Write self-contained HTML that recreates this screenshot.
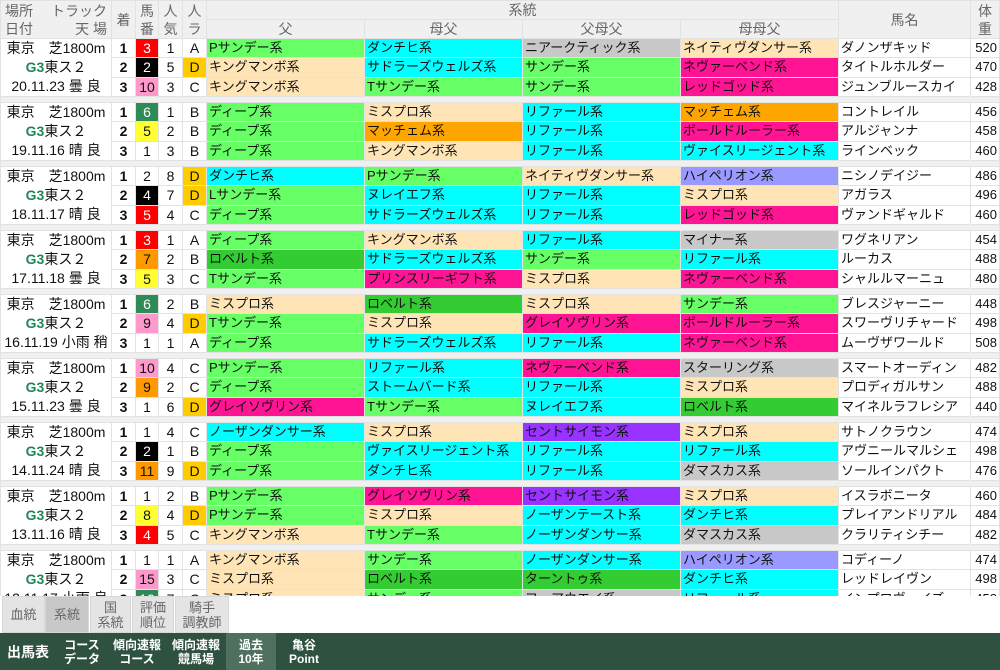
<!DOCTYPE html>
<html><head><meta charset="utf-8">
<style>
*{margin:0;padding:0;box-sizing:border-box}
body{width:1000px;height:670px;overflow:hidden;background:#fff;font-family:"Liberation Sans","Noto Sans CJK JP",sans-serif;position:relative}
table{position:absolute;left:0;top:0;width:1000px;table-layout:fixed;border-spacing:1px;background:#e2e2e2;font-size:13px;color:#111}
td,th{height:18px;line-height:18px;padding:0 2px;white-space:nowrap;overflow:hidden;background:#fff;font-weight:normal}
th{background:#f0f0f0;color:#666;font-size:14px;text-align:center}
.gap td{height:5px;line-height:5px;background:#f0f0f0;padding:0}
.pl{text-align:center;font-size:14px;line-height:19px;padding:0}
.pl b{color:#1a8a5a}
.n{text-align:center;font-size:14px}
.r{text-align:center;font-weight:bold;font-size:14px}
.w{text-align:right;font-size:13px}
.g{background:#66ff66}.p{background:#ffe4b5}.c{background:#00ffff}.y{background:#c8c8c8}.m{background:#ff1493}.o{background:#ffa500}.d{background:#33cc33}.v{background:#9933ff}.b{background:#9999ff}
.red{background:#ff0000;color:#fff}.blk{background:#000;color:#fff}.pk{background:#ff99cc}.gr{background:#2e8b57;color:#fff}.ye{background:#ffff33}.or{background:#ff9900}
.D{background:#ffcc00}
.tabs{position:absolute;left:0;top:596px;width:1000px;height:37px;background:#fff}
.tab{position:absolute;top:0;height:37px;background:#e4e4e4;color:#666;font-size:13px;line-height:15px;text-align:center;display:flex;align-items:center;justify-content:center;border:1px solid #d8d8d8}
.nav{position:absolute;left:0;top:633px;width:1000px;height:37px;background:#2f5140;color:#fff;font-size:12px;font-weight:bold}
.nv{position:absolute;top:0;height:37px;display:flex;align-items:center;justify-content:center;text-align:center;line-height:14px}
</style></head><body>
<table>
<colgroup><col style="width:110px"><col style="width:23px"><col style="width:22px"><col style="width:23px"><col style="width:23px"><col style="width:157px"><col style="width:157px"><col style="width:157px"><col style="width:157px"><col style="width:131px"><col style="width:28px"></colgroup>
<tr><th rowspan="2" style="line-height:18px;padding:0 4px;text-align:left"><div style="display:flex;justify-content:space-between"><span>場所</span><span>トラック</span></div><div style="display:flex;justify-content:space-between"><span>日付</span><span>天 場</span></div></th><th rowspan="2">着</th><th rowspan="2" style="line-height:18px">馬<br>番</th><th rowspan="2" style="line-height:18px">人<br>気</th><th rowspan="2" style="line-height:18px">人<br>ラ</th><th colspan="4">系統</th><th rowspan="2">馬名</th><th rowspan="2" style="line-height:18px">体<br>重</th></tr>
<tr><th>父</th><th>母父</th><th>父母父</th><th>母母父</th></tr>

<tr><td rowspan="3" class="pl">東京　芝1800m<br><b>G3</b>東ス２<br>20.11.23 曇 良</td><td class="r">1</td><td class="n red">3</td><td class="n">1</td><td class="n">A</td><td class="g">Pサンデー系</td><td class="c">ダンチヒ系</td><td class="y">ニアークティック系</td><td class="p">ネイティヴダンサー系</td><td>ダノンザキッド</td><td class="w">520</td></tr>
<tr><td class="r">2</td><td class="n blk">2</td><td class="n">5</td><td class="n D">D</td><td class="p">キングマンボ系</td><td class="c">サドラーズウェルズ系</td><td class="g">サンデー系</td><td class="m">ネヴァーベンド系</td><td>タイトルホルダー</td><td class="w">470</td></tr>
<tr><td class="r">3</td><td class="n pk">10</td><td class="n">3</td><td class="n">C</td><td class="p">キングマンボ系</td><td class="g">Tサンデー系</td><td class="g">サンデー系</td><td class="m">レッドゴッド系</td><td>ジュンブルースカイ</td><td class="w">428</td></tr>
<tr class="gap"><td colspan="11"></td></tr>

<tr><td rowspan="3" class="pl">東京　芝1800m<br><b>G3</b>東ス２<br>19.11.16 晴 良</td><td class="r">1</td><td class="n gr">6</td><td class="n">1</td><td class="n">B</td><td class="g">ディープ系</td><td class="p">ミスプロ系</td><td class="c">リファール系</td><td class="o">マッチェム系</td><td>コントレイル</td><td class="w">456</td></tr>
<tr><td class="r">2</td><td class="n ye">5</td><td class="n">2</td><td class="n">B</td><td class="g">ディープ系</td><td class="o">マッチェム系</td><td class="c">リファール系</td><td class="m">ボールドルーラー系</td><td>アルジャンナ</td><td class="w">458</td></tr>
<tr><td class="r">3</td><td class="n">1</td><td class="n">3</td><td class="n">B</td><td class="g">ディープ系</td><td class="p">キングマンボ系</td><td class="c">リファール系</td><td class="c">ヴァイスリージェント系</td><td>ラインベック</td><td class="w">460</td></tr>
<tr class="gap"><td colspan="11"></td></tr>

<tr><td rowspan="3" class="pl">東京　芝1800m<br><b>G3</b>東ス２<br>18.11.17 晴 良</td><td class="r">1</td><td class="n">2</td><td class="n">8</td><td class="n D">D</td><td class="c">ダンチヒ系</td><td class="g">Pサンデー系</td><td class="p">ネイティヴダンサー系</td><td class="b">ハイペリオン系</td><td>ニシノデイジー</td><td class="w">486</td></tr>
<tr><td class="r">2</td><td class="n blk">4</td><td class="n">7</td><td class="n D">D</td><td class="g">Lサンデー系</td><td class="c">ヌレイエフ系</td><td class="c">リファール系</td><td class="p">ミスプロ系</td><td>アガラス</td><td class="w">496</td></tr>
<tr><td class="r">3</td><td class="n red">5</td><td class="n">4</td><td class="n">C</td><td class="g">ディープ系</td><td class="c">サドラーズウェルズ系</td><td class="c">リファール系</td><td class="m">レッドゴッド系</td><td>ヴァンドギャルド</td><td class="w">460</td></tr>
<tr class="gap"><td colspan="11"></td></tr>

<tr><td rowspan="3" class="pl">東京　芝1800m<br><b>G3</b>東ス２<br>17.11.18 曇 良</td><td class="r">1</td><td class="n red">3</td><td class="n">1</td><td class="n">A</td><td class="g">ディープ系</td><td class="p">キングマンボ系</td><td class="c">リファール系</td><td class="y">マイナー系</td><td>ワグネリアン</td><td class="w">454</td></tr>
<tr><td class="r">2</td><td class="n or">7</td><td class="n">2</td><td class="n">B</td><td class="d">ロベルト系</td><td class="c">サドラーズウェルズ系</td><td class="g">サンデー系</td><td class="c">リファール系</td><td>ルーカス</td><td class="w">488</td></tr>
<tr><td class="r">3</td><td class="n ye">5</td><td class="n">3</td><td class="n">C</td><td class="g">Tサンデー系</td><td class="m">プリンスリーギフト系</td><td class="p">ミスプロ系</td><td class="m">ネヴァーベンド系</td><td>シャルルマーニュ</td><td class="w">480</td></tr>
<tr class="gap"><td colspan="11"></td></tr>

<tr><td rowspan="3" class="pl">東京　芝1800m<br><b>G3</b>東ス２<br>16.11.19 小雨 稍</td><td class="r">1</td><td class="n gr">6</td><td class="n">2</td><td class="n">B</td><td class="p">ミスプロ系</td><td class="d">ロベルト系</td><td class="p">ミスプロ系</td><td class="g">サンデー系</td><td>ブレスジャーニー</td><td class="w">448</td></tr>
<tr><td class="r">2</td><td class="n pk">9</td><td class="n">4</td><td class="n D">D</td><td class="g">Tサンデー系</td><td class="p">ミスプロ系</td><td class="m">グレイソヴリン系</td><td class="m">ボールドルーラー系</td><td>スワーヴリチャード</td><td class="w">498</td></tr>
<tr><td class="r">3</td><td class="n">1</td><td class="n">1</td><td class="n">A</td><td class="g">ディープ系</td><td class="c">サドラーズウェルズ系</td><td class="c">リファール系</td><td class="m">ネヴァーベンド系</td><td>ムーヴザワールド</td><td class="w">508</td></tr>
<tr class="gap"><td colspan="11"></td></tr>

<tr><td rowspan="3" class="pl">東京　芝1800m<br><b>G3</b>東ス２<br>15.11.23 曇 良</td><td class="r">1</td><td class="n pk">10</td><td class="n">4</td><td class="n">C</td><td class="g">Pサンデー系</td><td class="c">リファール系</td><td class="m">ネヴァーベンド系</td><td class="y">スターリング系</td><td>スマートオーディン</td><td class="w">482</td></tr>
<tr><td class="r">2</td><td class="n or">9</td><td class="n">2</td><td class="n">C</td><td class="g">ディープ系</td><td class="c">ストームバード系</td><td class="c">リファール系</td><td class="p">ミスプロ系</td><td>プロディガルサン</td><td class="w">488</td></tr>
<tr><td class="r">3</td><td class="n">1</td><td class="n">6</td><td class="n D">D</td><td class="m">グレイソヴリン系</td><td class="g">Tサンデー系</td><td class="c">ヌレイエフ系</td><td class="d">ロベルト系</td><td>マイネルラフレシア</td><td class="w">440</td></tr>
<tr class="gap"><td colspan="11"></td></tr>

<tr><td rowspan="3" class="pl">東京　芝1800m<br><b>G3</b>東ス２<br>14.11.24 晴 良</td><td class="r">1</td><td class="n">1</td><td class="n">4</td><td class="n">C</td><td class="c">ノーザンダンサー系</td><td class="p">ミスプロ系</td><td class="v">セントサイモン系</td><td class="p">ミスプロ系</td><td>サトノクラウン</td><td class="w">474</td></tr>
<tr><td class="r">2</td><td class="n blk">2</td><td class="n">1</td><td class="n">B</td><td class="g">ディープ系</td><td class="c">ヴァイスリージェント系</td><td class="c">リファール系</td><td class="c">リファール系</td><td>アヴニールマルシェ</td><td class="w">498</td></tr>
<tr><td class="r">3</td><td class="n or">11</td><td class="n">9</td><td class="n D">D</td><td class="g">ディープ系</td><td class="c">ダンチヒ系</td><td class="c">リファール系</td><td class="y">ダマスカス系</td><td>ソールインパクト</td><td class="w">476</td></tr>
<tr class="gap"><td colspan="11"></td></tr>

<tr><td rowspan="3" class="pl">東京　芝1800m<br><b>G3</b>東ス２<br>13.11.16 晴 良</td><td class="r">1</td><td class="n">1</td><td class="n">2</td><td class="n">B</td><td class="g">Pサンデー系</td><td class="m">グレイソヴリン系</td><td class="v">セントサイモン系</td><td class="p">ミスプロ系</td><td>イスラボニータ</td><td class="w">460</td></tr>
<tr><td class="r">2</td><td class="n ye">8</td><td class="n">4</td><td class="n D">D</td><td class="g">Pサンデー系</td><td class="p">ミスプロ系</td><td class="c">ノーザンテースト系</td><td class="c">ダンチヒ系</td><td>プレイアンドリアル</td><td class="w">484</td></tr>
<tr><td class="r">3</td><td class="n red">4</td><td class="n">5</td><td class="n">C</td><td class="p">キングマンボ系</td><td class="g">Tサンデー系</td><td class="c">ノーザンダンサー系</td><td class="y">ダマスカス系</td><td>クラリティシチー</td><td class="w">482</td></tr>
<tr class="gap"><td colspan="11"></td></tr>

<tr><td rowspan="3" class="pl">東京　芝1800m<br><b>G3</b>東ス２<br>12.11.17 小雨 良</td><td class="r">1</td><td class="n">1</td><td class="n">1</td><td class="n">A</td><td class="p">キングマンボ系</td><td class="g">サンデー系</td><td class="c">ノーザンダンサー系</td><td class="b">ハイペリオン系</td><td>コディーノ</td><td class="w">474</td></tr>
<tr><td class="r">2</td><td class="n pk">15</td><td class="n">3</td><td class="n">C</td><td class="p">ミスプロ系</td><td class="d">ロベルト系</td><td class="d">ターントゥ系</td><td class="c">ダンチヒ系</td><td>レッドレイヴン</td><td class="w">498</td></tr>
<tr><td class="r">3</td><td class="n gr">10</td><td class="n">7</td><td class="n">C</td><td class="p">ミスプロ系</td><td class="g">サンデー系</td><td class="y">フェアウエイ系</td><td class="c">リファール系</td><td>インプロヴァイズ</td><td class="w">458</td></tr>
</table>

<div class="tabs">
<div class="tab" style="left:2px;width:43px">血統</div>
<div class="tab" style="left:45px;width:44px;background:#c8c8c8">系統</div>
<div class="tab" style="left:90px;width:41px">国<br>系統</div>
<div class="tab" style="left:132px;width:42px">評価<br>順位</div>
<div class="tab" style="left:175px;width:54px">騎手<br>調教師</div>
</div>
<div class="nav">
<div class="nv" style="left:2px;width:52px;font-size:14px">出馬表</div>
<div class="nv" style="left:60px;width:44px">コース<br>データ</div>
<div class="nv" style="left:110px;width:54px">傾向速報<br>コース</div>
<div class="nv" style="left:170px;width:52px">傾向速報<br>競馬場</div>
<div class="nv" style="left:226px;width:50px;background:#4f705f">過去<br>10年</div>
<div class="nv" style="left:284px;width:40px">亀谷<br>Point</div>
</div>
</body></html>
